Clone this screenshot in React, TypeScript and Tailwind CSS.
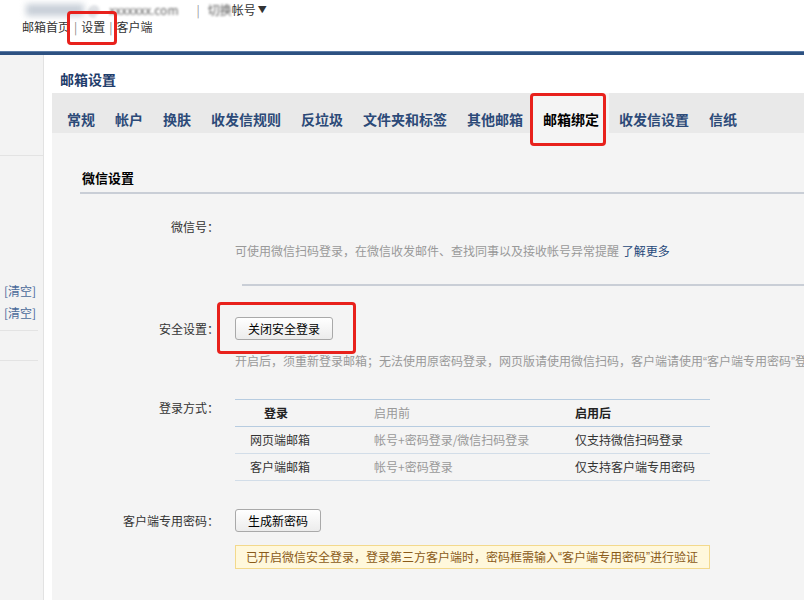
import React from 'react';

const tabs = ['常规', '帐户', '换肤', '收发信规则', '反垃圾', '文件夹和标签', '其他邮箱', '邮箱绑定', '收发信设置', '信纸'];

function Btn({ children }: { children: React.ReactNode }) {
  return (
    <button className="h-[23px] px-[12px] rounded-[3px] border border-[#a9a9a9] bg-gradient-to-b from-white to-[#ececec] text-[12px] text-black leading-none">
      {children}
    </button>
  );
}

function Mark({ className }: { className: string }) {
  return <div className={`absolute border-[3px] border-[#e8211c] rounded-[4px] pointer-events-none ${className}`} />;
}

function Q({ children }: { children: React.ReactNode }) {
  return <span style={{ fontFamily: '"Liberation Sans", sans-serif' }}>{children}</span>;
}

function Label({ children }: { children: React.ReactNode }) {
  return <div className="w-[139px] -mr-[6px] text-right shrink-0 leading-[18px]">{children}：</div>;
}

export default function App() {
  return (
    <div
      className="relative w-[804px] h-[600px] overflow-hidden bg-white text-[12px] text-[#333]"
      style={{ fontFamily: '"Noto Sans CJK SC", "Noto Sans", sans-serif' }}
    >
      {/* top header */}
      <div className="h-[51px] pl-[22px]">
        <div className="flex items-center h-[20px] text-[12px]">
          <span className="ml-[4px] w-[58px] h-[12px] bg-[#c8cfd8] blur-[3px]" />
          <span className="ml-[4px] text-[#8a93a0] blur-[1.5px]">@</span>
          <span className="ml-[10px] text-[#666] blur-[1.2px]">xxxxxxx.com</span>
          <span className="ml-[18px] text-[#999]">|</span>
          <span className="ml-[8px] text-[#555] blur-[1.2px]">切换</span>
          <span className="text-[#333]">帐号</span>
          <span className="ml-[2px] text-[9px] text-[#333]">▼</span>
        </div>
        <div className="flex items-center h-[14px] text-[12px] text-[#333]">
          <span>邮箱首页</span>
          <span className="mx-[4px] text-[#888]">|</span>
          <span>设置</span>
          <span className="mx-[4px] text-[#888]">|</span>
          <span>客户端</span>
        </div>
      </div>
      <div className="h-[4px] bg-[#2d5181] border-t border-[#5a7aa5]" />

      <div className="flex h-[545px]">
        {/* left sidebar */}
        <aside className="w-[44px] bg-[#f3f3f3] border-r border-[#e2e2e2] shrink-0">
          <div className="h-[101px] border-b border-[#e3e3e3]" />
          <div className="mt-[124px] text-right pr-[7px] text-[#4a6a9a] leading-[22px]">
            <div>[清空]</div>
            <div>[清空]</div>
          </div>
          <div className="mt-[6px] mr-[5px] border-b border-[#e3e3e3]" />
          <div className="mt-[29px] mr-[5px] border-b border-[#e3e3e3]" />
        </aside>

        {/* main */}
        <main className="flex-1 pl-[8px] flex flex-col min-w-0">
          <div className="h-[38px] pl-[8px] pt-[14px] text-[14px] leading-[20px] font-semibold text-[#1f3d6b]">邮箱设置</div>
          <div className="h-[40px] bg-[#e9e9e9] flex pl-[5px]">
            {tabs.map((t) => (
              <div
                key={t}
                className={
                  t === '邮箱绑定'
                    ? 'px-[10px] pt-[16px] leading-[20px] bg-[#f4f4f4] text-[14px] font-semibold text-black'
                    : 'px-[10px] pt-[16px] leading-[20px] text-[14px] font-semibold text-[#2c4a78]'
                }
              >
                {t}
              </div>
            ))}
          </div>

          <div className="flex-1 bg-[#f4f4f4] pl-[28px] pt-[36px]">
            <div className="border-b-2 border-[#c9ced6] pl-[2px] pb-[5px] text-[13px] leading-[18px] font-semibold text-black">微信设置</div>

            {/* 微信号 */}
            <div className="flex mt-[24px]">
              <Label>微信号</Label>
            </div>
            <div className="mt-[6px] ml-[155px] leading-[18px] text-[#999] whitespace-nowrap">
              可使用微信扫码登录，在微信收发邮件、查找同事以及接收帐号异常提醒 <span className="text-[#26487a]">了解更多</span>
            </div>
            <div className="mt-[24px] ml-[162px] border-t-2 border-[#c9ced6]" />

            {/* 安全设置 */}
            <div className="flex items-center mt-[31px] gap-[22px]">
              <Label>安全设置</Label>
              <Btn>关闭安全登录</Btn>
            </div>
            <div className="mt-[12px] ml-[155px] w-[494px] leading-[18px] text-[#999] whitespace-nowrap">
              开启后，须重新登录邮箱；无法使用原密码登录，网页版请使用微信扫码，客户端请使用<Q>“</Q>客户端专用密码<Q>”</Q>登录
            </div>

            {/* 登录方式 */}
            <div className="flex items-start mt-[28px] gap-[22px]">
              <Label>登录方式</Label>
              <div className="w-[475px] border-t border-[#b7cce0]">
                <div className="flex h-[27px] items-center border-b border-[#b7cce0]">
                  <div className="w-[139px] pl-[29px] font-semibold text-[#222]">登录</div>
                  <div className="w-[201px] text-[#999]">启用前</div>
                  <div className="flex-1 font-semibold text-[#222]">启用后</div>
                </div>
                <div className="flex h-[27px] items-center border-b border-[#d2dde8]">
                  <div className="w-[139px] pl-[15px]">网页端邮箱</div>
                  <div className="w-[201px] text-[#999]">帐号+密码登录/微信扫码登录</div>
                  <div className="flex-1">仅支持微信扫码登录</div>
                </div>
                <div className="flex h-[27px] items-center border-b border-[#d2dde8]">
                  <div className="w-[139px] pl-[15px]">客户端邮箱</div>
                  <div className="w-[201px] text-[#999]">帐号+密码登录</div>
                  <div className="flex-1">仅支持客户端专用密码</div>
                </div>
              </div>
            </div>

            {/* 客户端专用密码 */}
            <div className="flex items-center mt-[28px] gap-[22px]">
              <Label>客户端专用密码</Label>
              <Btn>生成新密码</Btn>
            </div>
            <div className="mt-[13px] ml-[155px] w-[475px] h-[24px] flex items-center pl-[10px] bg-[#fff8dc] border border-[#f3d98c] text-[#8a5a18] whitespace-nowrap">
              已开启微信安全登录，登录第三方客户端时，密码框需输入<Q>“</Q>客户端专用密码<Q>”</Q>进行验证
            </div>
          </div>
        </main>
      </div>

      {/* red annotation boxes */}
      <Mark className="left-[67px] top-[11px] w-[50px] h-[34px]" />
      <Mark className="left-[530px] top-[93px] w-[76px] h-[53px]" />
      <Mark className="left-[217px] top-[302px] w-[139px] h-[52px]" />
    </div>
  );
}
